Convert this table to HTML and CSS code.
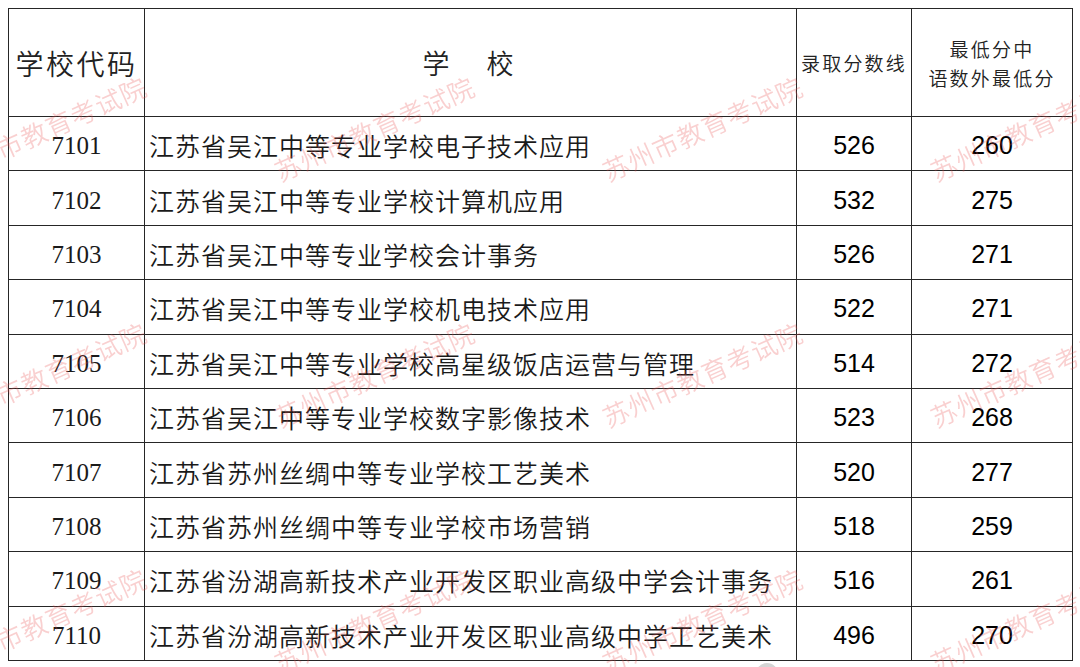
FILE: index.html
```html
<!DOCTYPE html>
<html lang="zh-CN">
<head>
<meta charset="utf-8">
<title>录取分数线</title>
<link rel="stylesheet" href="styles.css">
</head>
<body>
<table class="score-table">
  <colgroup>
    <col class="c-code">
    <col class="c-name">
    <col class="c-score">
    <col class="c-min">
  </colgroup>
  <thead>
    <tr>
      <th class="h-code">学校代码</th>
      <th class="h-name">学　校</th>
      <th class="h-small">录取分数线</th>
      <th class="h-small h-two"><span class="line">最低分中</span><span class="line">语数外最低分</span></th>
    </tr>
  </thead>
  <tbody>
    <tr><td class="code">7101</td><td class="name">江苏省吴江中等专业学校电子技术应用</td><td class="num">526</td><td class="num">260</td></tr>
    <tr><td class="code">7102</td><td class="name">江苏省吴江中等专业学校计算机应用</td><td class="num">532</td><td class="num">275</td></tr>
    <tr><td class="code">7103</td><td class="name">江苏省吴江中等专业学校会计事务</td><td class="num">526</td><td class="num">271</td></tr>
    <tr><td class="code">7104</td><td class="name">江苏省吴江中等专业学校机电技术应用</td><td class="num">522</td><td class="num">271</td></tr>
    <tr><td class="code">7105</td><td class="name">江苏省吴江中等专业学校高星级饭店运营与管理</td><td class="num">514</td><td class="num">272</td></tr>
    <tr><td class="code">7106</td><td class="name">江苏省吴江中等专业学校数字影像技术</td><td class="num">523</td><td class="num">268</td></tr>
    <tr><td class="code">7107</td><td class="name">江苏省苏州丝绸中等专业学校工艺美术</td><td class="num">520</td><td class="num">277</td></tr>
    <tr><td class="code">7108</td><td class="name">江苏省苏州丝绸中等专业学校市场营销</td><td class="num">518</td><td class="num">259</td></tr>
    <tr><td class="code">7109</td><td class="name">江苏省汾湖高新技术产业开发区职业高级中学会计事务</td><td class="num">516</td><td class="num">261</td></tr>
    <tr><td class="code">7110</td><td class="name">江苏省汾湖高新技术产业开发区职业高级中学工艺美术</td><td class="num">496</td><td class="num">270</td></tr>
  </tbody>
</table>

<div class="wm-layer" aria-hidden="true">
  <div class="wm-grid">
    <div class="wm-cell"><span class="wm">苏州市教育考试院</span></div>
    <div class="wm-cell"><span class="wm">苏州市教育考试院</span></div>
    <div class="wm-cell"><span class="wm">苏州市教育考试院</span></div>
    <div class="wm-cell"><span class="wm">苏州市教育考试院</span></div>
    <div class="wm-cell"><span class="wm">苏州市教育考试院</span></div>
    <div class="wm-cell"><span class="wm">苏州市教育考试院</span></div>
    <div class="wm-cell"><span class="wm">苏州市教育考试院</span></div>
    <div class="wm-cell"><span class="wm">苏州市教育考试院</span></div>
    <div class="wm-cell"><span class="wm">苏州市教育考试院</span></div>
    <div class="wm-cell"><span class="wm">苏州市教育考试院</span></div>
    <div class="wm-cell"><span class="wm">苏州市教育考试院</span></div>
    <div class="wm-cell"><span class="wm">苏州市教育考试院</span></div>
  </div>
</div>

<div class="peek-dot" aria-hidden="true"></div>
</body>
</html>
```
FILE: styles.css
```css
html, body {
  margin: 0;
  padding: 0;
  background: #ffffff;
  overflow: hidden;
}

body {
  width: 1080px;
  height: 667px;
  padding: 8px 0 0 8px;
  box-sizing: border-box;
  font-family: "Noto Sans CJK SC", "Noto Sans", sans-serif;
  color: #111111;
}

.score-table {
  border-collapse: collapse;
  table-layout: fixed;
  width: 1064px;
}

.c-code { width: 136px; }
.c-name { width: 652px; }
.c-score { width: 115px; }
.c-min { width: 161px; }

.score-table th,
.score-table td {
  border: 1.5px solid #262626;
  padding: 0;
  white-space: nowrap;
  overflow: hidden;
}

.score-table thead tr {
  height: 108px;
}

.score-table tbody tr {
  height: 54.4px;
}

.score-table th {
  font-family: "Noto Sans CJK SC DemiLight", "Noto Sans CJK SC Light", "Noto Sans CJK SC", sans-serif;
  font-weight: 300;
  color: #222222;
  text-align: center;
  vertical-align: middle;
}

.h-code {
  font-size: 28px;
  letter-spacing: 2.5px;
  padding-top: 8px;
  padding-left: 3px;
}

.h-name {
  font-size: 27px;
  letter-spacing: 5px;
  padding-top: 6px;
  padding-left: 5px;
}

.h-small {
  font-size: 19px;
  letter-spacing: 2.2px;
  padding-top: 2px;
}

.h-two {
  line-height: 29px;
  padding-top: 2px;
}

.h-two .line {
  display: block;
}

.code {
  font-family: "Liberation Serif", "Times New Roman", serif;
  font-size: 25px;
  text-align: center;
  padding-top: 5px !important;
  color: #1a1a1a;
}

.name {
  font-family: "Noto Sans CJK SC DemiLight", "Noto Sans CJK SC Light", "Noto Sans CJK SC", sans-serif;
  font-weight: 300;
  font-size: 25px;
  letter-spacing: 1px;
  padding-left: 4px !important;
  padding-top: 3px !important;
  color: #1a1a1a;
}

.num {
  font-family: "Liberation Sans", Arial, sans-serif;
  font-size: 25px;
  text-align: center;
  padding-top: 4px !important;
  color: #000;
}

/* watermark overlay */
.wm-layer {
  position: fixed;
  top: 0;
  left: 0;
  width: 1080px;
  height: 667px;
  overflow: hidden;
  pointer-events: none;
}

.wm-grid {
  position: absolute;
  top: -62px;
  left: -47px;
  display: grid;
  grid-template-columns: repeat(4, 328px);
  grid-auto-rows: 246px;
}

.wm-cell {
  display: flex;
  align-items: flex-end;
}

.wm {
  display: block;
  font-family: "Noto Sans CJK SC DemiLight", "Noto Sans CJK SC Light", "Noto Sans CJK SC", sans-serif;
  font-weight: 300;
  font-size: 26px;
  line-height: 26px;
  letter-spacing: 1px;
  white-space: nowrap;
  color: rgba(232, 72, 72, 0.26);
  transform-origin: 0 100%;
  transform: rotate(-24deg);
}

.peek-dot {
  position: fixed;
  left: 756px;
  top: 663px;
  width: 22px;
  height: 22px;
  border-radius: 50%;
  background: #d4d4d4;
}
```
